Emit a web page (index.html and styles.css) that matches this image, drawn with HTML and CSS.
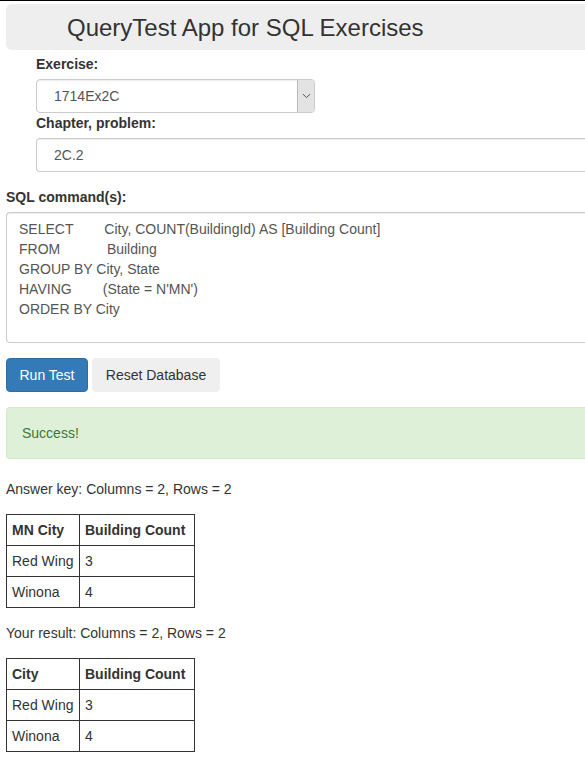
FILE: index.html
```html
<!DOCTYPE html>
<html lang="en">
<head>
<meta charset="utf-8">
<title>QueryTest App for SQL Exercises</title>
<link rel="stylesheet" href="styles.css">
</head>
<body>
<div class="topline"></div>
<div class="page">
  <header class="jumbo"><h1>QueryTest App for SQL Exercises</h1></header>
  <div class="selectors">
    <label class="lbl">Exercise:</label>
    <div class="select">
      <span class="select-text">1714Ex2C</span>
      <span class="select-btn"><svg width="9" height="6" viewBox="0 0 9 6"><path d="M1 1.2 L4.5 4.6 L8 1.2" fill="none" stroke="#555" stroke-width="1"/></svg></span>
    </div>
    <label class="lbl">Chapter, problem:</label>
    <div class="input">2C.2</div>
  </div>
  <label class="lbl sql-lbl">SQL command(s):</label>
  <div class="textarea">SELECT        City, COUNT(BuildingId) AS [Building Count]
FROM            Building
GROUP BY City, State
HAVING        (State = N'MN')
ORDER BY City</div>
  <div class="buttons">
    <button class="btn btn-primary">Run Test</button>
    <button class="btn btn-default">Reset Database</button>
  </div>
  <div class="alert">Success!</div>
  <p class="summary">Answer key: Columns = 2, Rows = 2</p>
  <table class="result">
    <tr><th class="c1">MN City</th><th>Building Count</th></tr>
    <tr><td class="c1">Red Wing</td><td>3</td></tr>
    <tr><td class="c1">Winona</td><td>4</td></tr>
  </table>
  <p class="summary second">Your result: Columns = 2, Rows = 2</p>
  <table class="result">
    <tr><th class="c1">City</th><th>Building Count</th></tr>
    <tr><td class="c1">Red Wing</td><td>3</td></tr>
    <tr><td class="c1">Winona</td><td>4</td></tr>
  </table>
</div>
</body>
</html>
```
FILE: styles.css
```css
html, body {
  margin: 0;
  padding: 0;
  overflow: hidden;
  background: #fff;
}
body {
  font-family: "Liberation Sans", Arial, sans-serif;
  font-size: 14px;
  line-height: 20px;
  color: #333;
}
.topline {
  height: 1px;
  background: #000;
}
.page {
  width: 720px;
  padding: 3px 0 0 6px;
}
.jumbo {
  background: #eee;
  border-radius: 6px;
  height: 46px;
  display: flex;
  align-items: center;
  padding-left: 61px;
}
.jumbo h1 {
  margin: 0;
  font-size: 24px;
  font-weight: normal;
  line-height: 30px;
  color: #333;
  position: relative;
  top: 1px;
}
.selectors {
  padding: 4px 0 0 30px;
  display: flex;
  flex-direction: column;
  align-items: flex-start;
}
.lbl {
  display: block;
  font-weight: bold;
  margin-bottom: 5px;
}
.select {
  width: 277px;
  height: 32px;
  border: 1px solid #ccc;
  border-radius: 4px;
  display: flex;
  align-items: center;
  justify-content: space-between;
  color: #555;
  box-shadow: inset 0 1px 1px rgba(0,0,0,.075);
}
.select-text {
  padding-left: 17px;
}
.select-btn {
  width: 16px;
  height: 32px;
  background: #e3e3e3;
  border-left: 1px solid #b8b8b8;
  border-radius: 0 3px 3px 0;
  display: flex;
  align-items: center;
  justify-content: center;
}
.input {
  align-self: stretch;
  height: 32px;
  border: 1px solid #ccc;
  border-right: none;
  border-radius: 4px 0 0 4px;
  padding-left: 17px;
  display: flex;
  align-items: center;
  color: #555;
  box-shadow: inset 0 1px 1px rgba(0,0,0,.075);
}
.sql-lbl {
  margin-top: 15px;
}
.textarea {
  height: 117px;
  border: 1px solid #ccc;
  border-right: none;
  border-radius: 4px 0 0 4px;
  padding: 6px 12px;
  white-space: pre;
  color: #555;
  box-shadow: inset 0 1px 1px rgba(0,0,0,.075);
}
.buttons {
  margin-top: 15px;
  display: flex;
  gap: 4px;
}
.btn {
  font-family: inherit;
  font-size: 14px;
  line-height: 20px;
  height: 34px;
  padding: 6px 12px;
  border-radius: 4px;
  border: 1px solid transparent;
  margin: 0;
}
.btn-primary {
  background: #337ab7;
  border-color: #2e6da4;
  color: #fff;
  width: 82px;
}
.btn-default {
  background: #efefef;
  border-color: #efefef;
  color: #333;
  width: 128px;
}
.alert {
  margin-top: 15px;
  box-sizing: border-box;
  height: 52px;
  padding: 15px;
  background: #dff0d8;
  border: 1px solid #d6e9c6;
  border-right: none;
  border-radius: 4px 0 0 4px;
  color: #3c763d;
}
.summary {
  margin: 20px 0 15px;
}
.summary.second {
  margin-top: 15px;
}
.result {
  border-collapse: collapse;
}
.result th, .result td {
  border: 1px solid #333;
  padding: 5px 5px;
  text-align: left;
  line-height: 20px;
  height: 20px;
}
.result th {
  font-weight: bold;
}
.result .c1 {
  width: 62px;
}
.result th:last-child, .result td:last-child {
  width: 104px;
}
```
